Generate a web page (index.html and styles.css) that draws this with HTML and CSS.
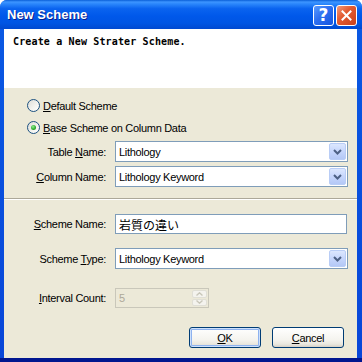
FILE: index.html
```html
<!DOCTYPE html>
<html>
<head>
<meta charset="utf-8">
<link rel="stylesheet" href="styles.css">
</head>
<body>
<div class="window">
  <div class="titlebar">
    <span class="title">New Scheme</span>
    <div class="tb-buttons">
      <span class="tb-btn help">?</span>
      <span class="tb-btn close"><svg width="13" height="13" viewBox="0 0 13 13"><path d="M2.5 2.5 L10.5 10.5 M10.5 2.5 L2.5 10.5" stroke="#fff" stroke-width="2" stroke-linecap="square"/></svg></span>
    </div>
  </div>
  <div class="client">
    <div class="header">Create a New Strater Scheme.</div>
    <div class="content">
      <div class="radios">
        <div class="radio"><span class="rb"></span><span><u>D</u>efault Scheme</span></div>
        <div class="radio"><span class="rb checked"><span class="dot"></span></span><span><u>B</u>ase Scheme on Column Data</span></div>
      </div>
      <div class="field f-table">
        <span class="lbl">Table <u>N</u>ame:</span>
        <div class="combo"><span class="val">Lithology</span><span class="dd"><svg width="9" height="6" viewBox="0 0 9 6"><path d="M1 1 L4.5 4.5 L8 1" fill="none" stroke="#4d6185" stroke-width="2"/></svg></span></div>
      </div>
      <div class="field f-column">
        <span class="lbl"><u>C</u>olumn Name:</span>
        <div class="combo"><span class="val">Lithology Keyword</span><span class="dd"><svg width="9" height="6" viewBox="0 0 9 6"><path d="M1 1 L4.5 4.5 L8 1" fill="none" stroke="#4d6185" stroke-width="2"/></svg></span></div>
      </div>
      <div class="sep"></div>
      <div class="field f-name">
        <span class="lbl"><u>S</u>cheme Name:</span>
        <div class="textbox"><span class="val jp">岩質の違い</span></div>
      </div>
      <div class="field f-type">
        <span class="lbl">Scheme <u>T</u>ype:</span>
        <div class="combo"><span class="val">Lithology Keyword</span><span class="dd"><svg width="9" height="6" viewBox="0 0 9 6"><path d="M1 1 L4.5 4.5 L8 1" fill="none" stroke="#4d6185" stroke-width="2"/></svg></span></div>
      </div>
      <div class="field f-count">
        <span class="lbl"><u>I</u>nterval Count:</span>
        <div class="spin"><span class="val">5</span>
          <div class="spin-btns">
            <span class="sb"><svg width="7" height="4" viewBox="0 0 7 4"><path d="M0.5 3.5 L3.5 0.8 L6.5 3.5" fill="none" stroke="#c9c7ba" stroke-width="1.4"/></svg></span>
            <span class="sb"><svg width="7" height="4" viewBox="0 0 7 4"><path d="M0.5 0.5 L3.5 3.2 L6.5 0.5" fill="none" stroke="#c9c7ba" stroke-width="1.4"/></svg></span>
          </div>
        </div>
      </div>
      <div class="actions">
        <button class="btn default"><u>O</u>K</button>
        <button class="btn"><u>C</u>ancel</button>
      </div>
    </div>
  </div>
</div>
</body>
</html>
```
FILE: styles.css
```css
* { box-sizing: border-box; }
html, body { margin: 0; padding: 0; background: #ffffff; }
body { font-family: "Liberation Sans", Arial, sans-serif; font-size: 11px; color: #000; letter-spacing: -0.3px; }
u { text-decoration: underline; text-underline-offset: 1px; }

.window {
  width: 362px;
  height: 362px;
  display: flex;
  flex-direction: column;
  border-radius: 7px 7px 0 0;
  overflow: hidden;
  background: linear-gradient(to bottom, #0a5ae4 0, #0846d8 calc(100% - 4px), #00168f calc(100% - 4px));
}

.titlebar {
  height: 29px;
  flex: none;
  display: flex;
  align-items: center;
  justify-content: space-between;
  padding: 0 5px 0 7px;
  background: linear-gradient(to bottom, #0a5fd8 0%, #3d95ff 7%, #2a86fb 14%, #0a63ef 30%, #0058ea 55%, #0055e3 80%, #0049d0 100%);
}
.title {
  color: #fff;
  font-weight: bold;
  font-size: 13px;
  letter-spacing: 0;
  text-shadow: 1px 1px 0 #0a1d8a;
  margin-top: -1px;
}
.tb-buttons { display: flex; gap: 2px; margin-top: 1px; }
.tb-btn {
  width: 21px;
  height: 21px;
  border: 1px solid #fff;
  border-radius: 3px;
  display: flex;
  align-items: center;
  justify-content: center;
}
.help {
  background: linear-gradient(135deg, #5a9bff 0%, #2d6ff0 45%, #1554e0 100%);
  color: #fff;
  font-weight: bold;
  font-size: 17px;
  letter-spacing: 0;
  font-family: "DejaVu Sans", sans-serif;
}
.close {
  background: linear-gradient(135deg, #f29a7a 0%, #e35c33 40%, #c9401b 100%);
}

.client {
  flex: 1;
  margin: 0 5px 4px 4px;
  background: #ece9d8;
  display: flex;
  flex-direction: column;
}
.header {
  height: 59px;
  flex: none;
  background: #fff;
  padding: 7px 0 0 9px;
  font-family: "DejaVu Sans Mono", monospace;
  font-weight: bold;
  font-size: 10px;
  letter-spacing: 0.15px;
  line-height: 12px;
}

.content { display: flex; flex-direction: column; padding-top: 11px; }

.radios { display: flex; flex-direction: column; gap: 9px; padding-left: 23px; }
.radio { display: flex; align-items: center; height: 13px; gap: 3px; }
.rb {
  width: 13px;
  height: 13px;
  border-radius: 50%;
  border: 1px solid #1c5180;
  background: linear-gradient(135deg, #dcdcd7 0%, #f4f4f0 60%, #ffffff 100%);
  display: flex;
  align-items: center;
  justify-content: center;
}
.dot {
  width: 5px;
  height: 5px;
  border-radius: 50%;
  background: radial-gradient(circle at 40% 35%, #8ef08e 0%, #2ca82c 60%, #1a8a1a 100%);
}

.field { display: flex; align-items: center; }
.lbl { width: 102px; text-align: right; margin-right: 9px; }
.f-table { margin-top: 7px; }
.f-column { margin-top: 4px; }
.f-name { margin-top: 14px; }
.f-type { margin-top: 14px; }
.f-count { margin-top: 19px; }

.combo, .textbox {
  width: 233px;
  height: 21px;
  border: 1px solid #7f9db9;
  background: #fff;
  display: flex;
  align-items: center;
  justify-content: space-between;
  padding: 1px 1px 1px 3px;
}
.textbox { height: 20px; width: 232px; }
.jp { font-family: "Noto Sans CJK JP", sans-serif; font-size: 12px; letter-spacing: 0; }
.dd {
  width: 17px;
  height: 17px;
  border: 1px solid #b9cdf6;
  border-radius: 2px;
  background: linear-gradient(to bottom, #dce7fe 0%, #c6d6fc 50%, #b4c8f6 100%);
  display: flex;
  align-items: center;
  justify-content: center;
}

.sep {
  margin-top: 11px;
  height: 2px;
  border-top: 1px solid #aca899;
  border-bottom: 1px solid #ffffff;
}

.spin {
  width: 94px;
  height: 20px;
  border: 1px solid #c9c7ba;
  background: #ece9d8;
  display: flex;
  align-items: center;
  justify-content: space-between;
  padding: 1px 1px 1px 3px;
  color: #aca899;
}
.spin-btns { display: flex; flex-direction: column; gap: 1px; height: 100%; }
.sb {
  width: 15px;
  flex: 1;
  background: #f4f3ee;
  border: 1px solid #e0dfd6;
  border-radius: 2px;
  display: flex;
  align-items: center;
  justify-content: center;
}

.actions {
  margin-top: 19px;
  display: flex;
  justify-content: flex-end;
  gap: 11px;
  padding-right: 13px;
}
.btn {
  width: 72px;
  height: 21px;
  border: 1px solid #003c74;
  border-radius: 3px;
  background: linear-gradient(to bottom, #ffffff 0%, #f5f4ef 60%, #e9e7df 85%, #d6d0c5 100%);
  font-family: "Liberation Sans", Arial, sans-serif;
  font-size: 11px;
  letter-spacing: -0.3px;
  color: #000;
  padding: 0;
}
.btn.default {
  box-shadow: inset 0 0 0 1px #cde0fb, inset 0 0 0 2px #8eb2ef;
}
```
